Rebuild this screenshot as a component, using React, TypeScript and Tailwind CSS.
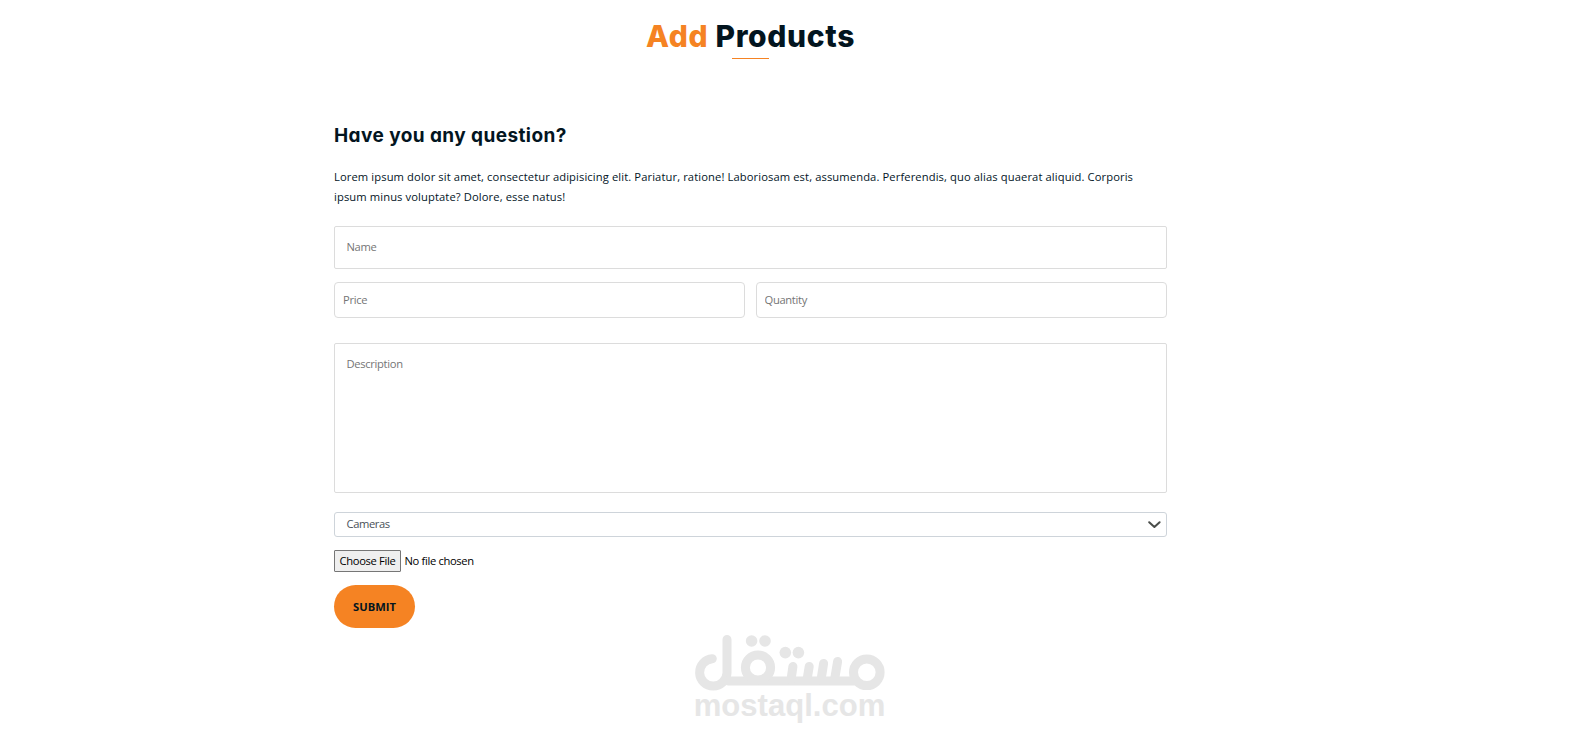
import React from "react";

const field =
  "block w-full border border-[#dcdcdc] bg-white text-[11.2px] tracking-[-0.32px] text-[#333] placeholder:text-[#757575] outline-none";

function Wordmark() {
  return (
    <svg width="192" height="90" viewBox="0 0 192 90" className="block" aria-label="mostaql">
      <g fill="none" stroke="#e6e6e6" strokeWidth="9" strokeLinecap="round">
        <path d="M18.3 23.7A13.7 13.7 0 1 0 33 38V4.5" />
        <path d="M34 45.9H160" />
        <circle cx="64" cy="32.5" r="12.6" />
        <circle cx="172.8" cy="37.3" r="13.3" />
        <path d="M98.9 31.5L97 45M115.2 31.5L113 45M129.6 28.5L127 45M143.6 26.5L140.5 45" />
      </g>
      <g fill="#e6e6e6">
        <circle cx="57.6" cy="6" r="5.8" />
        <circle cx="71" cy="6" r="5.8" />
        <circle cx="91.3" cy="17.6" r="5.8" />
        <circle cx="104.4" cy="17.6" r="5.8" />
        <text x="-0.3" y="80.5" textLength="191.6" lengthAdjust="spacingAndGlyphs" fontSize="30.5" fontWeight="700" fontFamily="Liberation Sans, Arial, sans-serif">
          mostaql.com
        </text>
      </g>
    </svg>
  );
}

export default function App() {
  return (
    <main className="min-h-[737px] bg-white font-['Open_Sans',sans-serif] text-[#03151f]">
      <div className="ml-[334px] flex w-[833px] flex-col pt-[17px]">
        <header className="flex h-[42px] flex-col items-center justify-between">
          <h1 className="whitespace-nowrap font-[Inter,sans-serif] text-[30px] leading-[39px] font-extrabold tracking-[0.65px] [font-feature-settings:'cv11']">
            <span className="text-[#f58323]">Add</span> Products
          </h1>
          <span className="h-px w-[37px] bg-[#f58323]" />
        </header>

        <h2 className="mt-[63px] h-[28px] font-[Inter,sans-serif] text-[19px] leading-[28px] font-bold tracking-[0.42px] [font-feature-settings:'cv11']">
          Have you any question?
        </h2>
        <p className="mt-[17px] h-10 whitespace-nowrap text-[11.2px] leading-5 tracking-[0.107px]">
          Lorem ipsum dolor sit amet, consectetur adipisicing elit. Pariatur, ratione! Laboriosam est, assumenda. Perferendis, quo alias quaerat aliquid. Corporis
          <br />
          ipsum minus voluptate? Dolore, esse natus!
        </p>

        <form className="mt-[19px] flex flex-col items-start" onSubmit={(e) => e.preventDefault()}>
          <input className={`${field} h-[43px] rounded-[2px] px-[11.5px] pb-[2px]`} placeholder="Name" />
          <div className="mt-[13px] grid w-full grid-cols-2 gap-[11px]">
            <input className={`${field} h-[36px] rounded-[4px] px-[8px] pb-[2px]`} placeholder="Price" />
            <input className={`${field} h-[36px] rounded-[4px] px-[7.5px] pb-[2px]`} placeholder="Quantity" />
          </div>
          <textarea
            className={`${field} mt-[25px] h-[150px] resize-none rounded-[2px] px-[11.5px] py-[11px] leading-[17px]`}
            placeholder="Description"
          />
          <div className="mt-[19px] flex h-[25px] w-full items-center justify-between rounded-[3px] border border-[#ced4da] pr-[5px] pl-[11.5px] text-[11.2px] tracking-[-0.4px] text-[#495057]">
            <span>Cameras</span>
            <svg width="14" height="8" viewBox="0 0 14 8" fill="none" stroke="#4a4d4a" strokeWidth="2">
              <path d="M2.2 1.2L7.4 6L12.6 1.2" strokeLinecap="round" strokeLinejoin="round" />
            </svg>
          </div>
          <div className="mt-[13px] flex h-[22px] items-center gap-[3.5px] text-[11.2px] tracking-[-0.34px] text-black">
            <button type="button" className="h-[22px] w-[67px] whitespace-nowrap rounded-[1px] border border-[#767676] bg-[#efefef]">
              Choose File
            </button>
            <span>No file chosen</span>
          </div>
          <button className="mt-[13px] h-[43px] w-[81px] rounded-full bg-[#f58323] pt-[2px] text-[11.2px] font-bold">SUBMIT</button>
        </form>
      </div>
      <div className="mt-[7px] ml-[694px]">
        <Wordmark />
      </div>
    </main>
  );
}
